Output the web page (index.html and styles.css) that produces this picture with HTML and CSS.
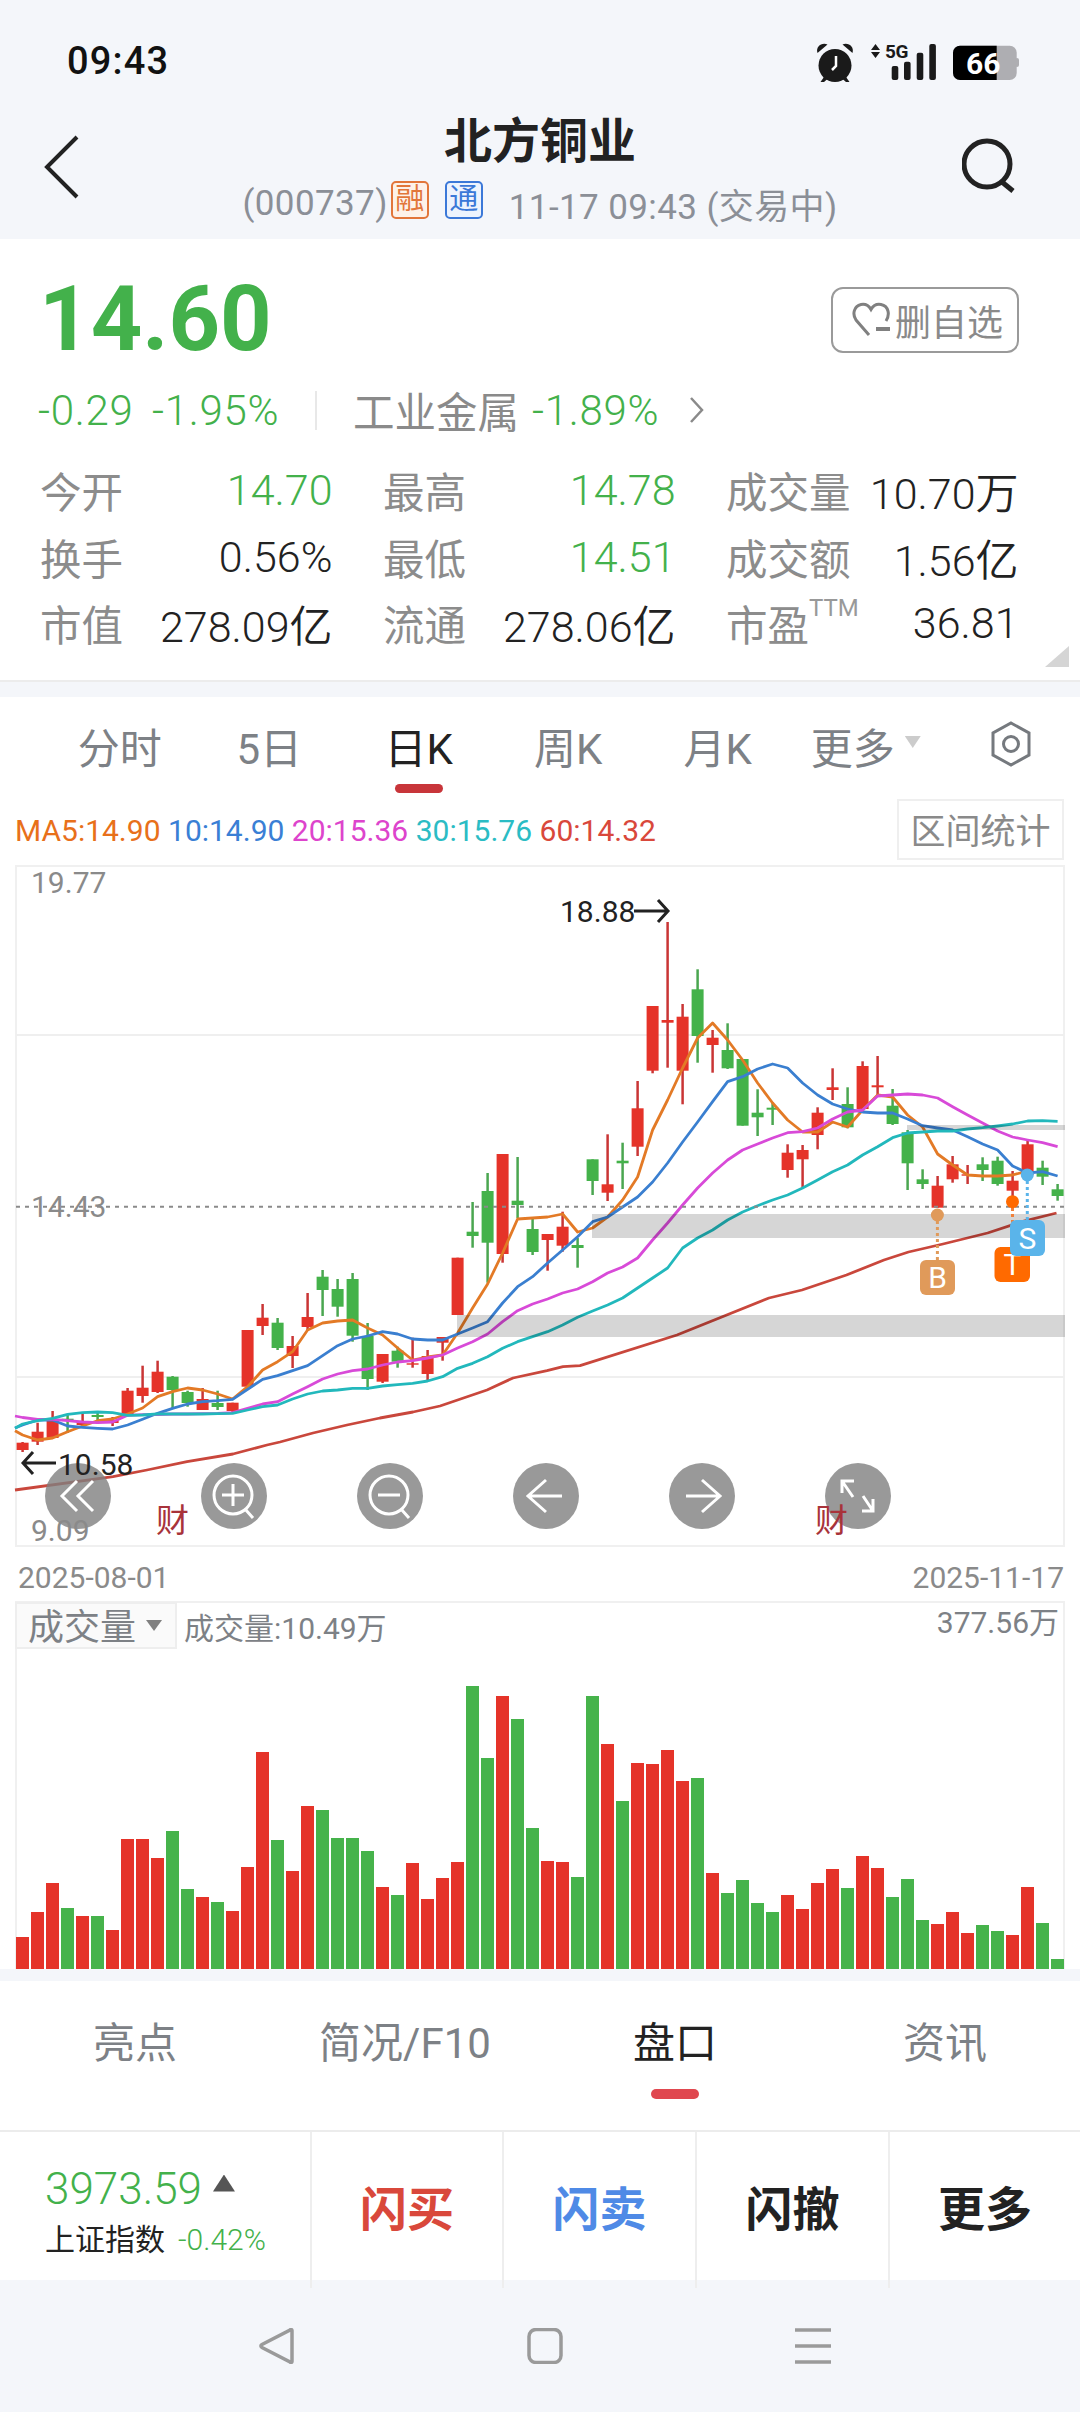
FILE: index.html
```html
<!DOCTYPE html>
<html lang="zh-CN">
<head>
<meta charset="utf-8">
<title>北方铜业</title>
<link rel="stylesheet" href="styles.css">
</head>
<body>
<div class="page">
  <header class="top">
    <div class="status">
      <span class="time">09:43</span>
      <svg class="status-icons" viewBox="815 40 206 44" width="206" height="44">
        <g class="ic-dark">
          <circle cx="835" cy="65.500" r="16.500"/>
          <path d="M817.500 53c-2-6 4-11 10-8.500l-10 8.500zM852.500 53c2-6-4-11-10-8.500l10 8.500z"/>
          <path d="M824 77l-3.500 5h3.500l4-3.500zM846 77l3.500 5H846l-4-3.500z"/>
          <path d="M871 50l4.500-6 4.500 6zM871 52l4.500 6 4.500-6z"/>
          <rect x="891.700" y="66" width="6.600" height="14" rx="2"/>
          <rect x="904" y="61.700" width="6.600" height="18.300" rx="2"/>
          <rect x="916.700" y="52.700" width="6.600" height="27.300" rx="2"/>
          <rect x="929.300" y="44" width="6.600" height="36" rx="2"/>
        </g>
        <path class="ic-hand" d="M836 56v10l-4 4"/>
        <text class="five-g" x="885" y="58">5G</text>
        <rect class="bat-rest" x="953" y="45.700" width="63.700" height="34.300" rx="7"/>
        <rect class="bat-rest" x="1015" y="58" width="4" height="9" rx="2"/>
        <path class="ic-black" d="M960 45.700h36.700V80H960a7 7 0 0 1-7-7V52.700a7 7 0 0 1 7-7z"/>
        <text class="bat-text" x="966" y="74">66</text>
      </svg>
    </div>
    <div class="titlebar">
      <svg class="back" viewBox="0 0 40 64" width="40" height="64"><path d="M34 2 4 32l30 30"/></svg>
      <div class="title-wrap">
        <h1 class="title">北方铜业</h1>
        <div class="subtitle">
          <span>(000737)</span><span class="tag tag-or">融</span><span class="tag tag-bl">通</span><span class="sub-time">11-17 09:43 (交易中)</span>
        </div>
      </div>
      <svg class="search" viewBox="0 0 54 56" width="54" height="56"><circle cx="25" cy="26" r="23"/><path d="M40 44l11 9"/></svg>
    </div>
  </header>

  <section class="quote">
    <div class="price-row">
      <span class="price">14.60</span>
      <button class="watch">
        <svg class="heart" viewBox="0 0 40 36" width="40" height="36"><path class="h1" d="M34 19C38 13 37 4 29 2.500 24 1.500 21 4 19 7.500 17 4 14 1.500 9 2.500 2 4 0 12 4 18l13 15"/><path class="h2" d="M24 27h14"/></svg>
        <span>删自选</span>
      </button>
    </div>
    <div class="change-row">
      <span class="chg chg-a">-0.29</span>
      <span class="chg chg-b">-1.95%</span>
      <i class="vline"></i>
      <span class="sector">工业金属</span>
      <span class="chg chg-c">-1.89%</span>
      <svg class="chev" viewBox="0 0 16 28" width="16" height="28"><path d="M2 2l11 12L2 26"/></svg>
    </div>
    <div class="stats">
      <div class="stat"><span class="k">今开</span><span class="v up">14.70</span></div>
      <div class="stat"><span class="k">最高</span><span class="v up">14.78</span></div>
      <div class="stat"><span class="k">成交量</span><span class="v">10.70万</span></div>
      <div class="stat"><span class="k">换手</span><span class="v">0.56%</span></div>
      <div class="stat"><span class="k">最低</span><span class="v up">14.51</span></div>
      <div class="stat"><span class="k">成交额</span><span class="v">1.56亿</span></div>
      <div class="stat"><span class="k">市值</span><span class="v">278.09亿</span></div>
      <div class="stat"><span class="k">流通</span><span class="v">278.06亿</span></div>
      <div class="stat"><span class="k">市盈<sup>TTM</sup></span><span class="v">36.81</span></div>
    </div>
    <i class="corner"></i>
  </section>

  <section class="chart-sec">
    <nav class="ktabs">
      <span class="ktab">分时</span>
      <span class="ktab">5日</span>
      <span class="ktab on">日K</span>
      <span class="ktab">周K</span>
      <span class="ktab">月K</span>
      <span class="ktab more">更多<i class="caret"></i></span>
      <svg class="hex" viewBox="0 0 40 46" width="40" height="46"><path d="M20 2l18 10v22L20 44 2 34V12z"/><circle cx="20" cy="23" r="7.500"/></svg>
    </nav>
    <div class="ma-row">
      <div class="ma">
        <span class="m5">MA5:14.90</span><span class="m10">10:14.90</span><span class="m20">20:15.36</span><span class="m30">30:15.76</span><span class="m60">60:14.32</span>
      </div>
      <span class="range">区间统计</span>
    </div>
    <svg class="kchart" viewBox="0 865 1080 684" width="1080" height="684">
      <rect class="frame" x="16" y="866" width="1048" height="680"/>
      <path class="grid" d="M16 1035H1064M16 1377H1064"/>
      <g id="candles"></g>
      <g id="lines"></g>
      <path class="dots" d="M16 1206.700H1064"/>
      <path class="band" d="M592 1214H1065V1238H592zM457 1315H1065V1337H457zM907 1125H1065V1130H907z"/>
      <g class="ctl">
        <circle cx="78" cy="1496" r="33"/><circle cx="234" cy="1496" r="33"/><circle cx="390" cy="1496" r="33"/><circle cx="546" cy="1496" r="33"/><circle cx="702" cy="1496" r="33"/><circle cx="858" cy="1496" r="33"/>
      </g>
      <g class="ctl-ic">
        <path d="M77 1481l-15 15 15 15M93 1481l-15 15 15 15"/>
        <circle cx="233" cy="1495" r="19"/><path d="M233 1484v22M222 1495h22M245 1509l8 9"/>
        <circle cx="389" cy="1495" r="19"/><path d="M378 1495h22M401 1509l8 9"/>
        <path d="M562 1496h-34M546 1480l-18 16 18 16"/>
        <path d="M686 1496h34M702 1480l18 16-18 16"/>
        <path d="M854 1481H842V1493M842 1481L853 1497M862 1511H873V1499M873 1511L863 1496"/>
      </g>
      <text class="axis" x="31" y="893">19.77</text>
      <text class="axis" x="31" y="1217">14.43</text>
      <text class="axis" x="31" y="1541">9.09</text>
      <text class="hl" x="560" y="922">18.88</text>
      <path class="hl-arrow" d="M634 911h34M658 900l10 11-10 11"/>
      <path class="hl-arrow" d="M56 1463H23M33 1452l-10 11 10 11"/>
      <text class="hl" x="58" y="1475">10.58</text>
      <text class="cai" x="156" y="1532">财</text>
      <text class="cai" x="815" y="1532">财</text>
      <path class="ln-b" d="M937.400 1215v45"/>
      <path class="ln-t" d="M1012.500 1202v45"/>
      <path class="ln-s" d="M1027.300 1175v45"/>
      <circle class="d-b" cx="937.400" cy="1215" r="6.500"/>
      <circle class="d-t" cx="1012.500" cy="1201.700" r="6.500"/>
      <circle class="d-s" cx="1027.300" cy="1175" r="6.500"/>
      <rect class="d-b" x="920" y="1260" width="35" height="35" rx="6"/>
      <text class="mk" x="937.500" y="1288">B</text>
      <rect class="d-t" x="994.500" y="1247" width="35.500" height="35" rx="6"/>
      <text class="mk" x="1012.500" y="1275">T</text>
      <rect class="d-s" x="1010" y="1220" width="35" height="36" rx="6"/>
      <text class="mk" x="1027.500" y="1249">S</text>
    </svg>
    <div class="dates"><span>2025-08-01</span><span>2025-11-17</span></div>
    <div class="vol">
      <div class="vol-sel">成交量<i class="vol-caret"></i></div>
      <span class="vol-now">成交量:10.49万</span>
      <span class="vol-max">377.56万</span>
      <div class="bars" id="bars"></div>
    </div>
  </section>

  <nav class="subtabs">
    <span class="subtab">亮点</span>
    <span class="subtab">简况/F10</span>
    <span class="subtab on">盘口</span>
    <span class="subtab">资讯</span>
  </nav>

  <div class="trade">
    <div class="index">
      <div class="idx-top"><span class="idx-val">3973.59</span><i class="idx-tri"></i></div>
      <div class="idx-bot"><span class="idx-name">上证指数</span><span class="idx-chg">-0.42%</span></div>
    </div>
    <span class="act red">闪买</span>
    <span class="act blue">闪卖</span>
    <span class="act">闪撤</span>
    <span class="act">更多</span>
  </div>

  <div class="sysnav">
    <svg viewBox="0 0 36 36" width="36" height="36"><path d="M33 2.500c0-1-1-1.500-2-.5L3 16.500c-1.500 1-1.500 2 0 3L31 34c1 1 2 .5 2-.5z"/></svg>
    <svg viewBox="0 0 36 36" width="36" height="36"><rect x="2" y="1.500" width="32" height="33" rx="7"/></svg>
    <svg viewBox="0 0 36 36" width="36" height="36"><path d="M0 2h36M0 18h36M0 34h36"/></svg>
  </div>
</div>
<script src="chart.js"></script>
</body>
</html>
```

FILE: styles.css
```css
* { box-sizing: border-box; }
html, body { margin: 0; padding: 0; }
body {
  width: 1080px;
  height: 2412px;
  overflow: hidden;
  background: #f4f6fa;
  color: #222;
  font-family: Roboto, "Noto Sans CJK SC", sans-serif;
}
i { font-style: normal; display: block; }
.page { width: 1080px; }

/* status + title */
.status {
  height: 100px;
  padding: 22px 59px 0 67px;
  display: flex;
  align-items: center;
  justify-content: space-between;
}
.time { font-size: 38px; font-weight: 500; letter-spacing: 1.200px; color: #111; }
.status-icons { display: block; margin-top: 2px; }
.ic-dark { fill: #1a1a1a; }
.ic-black { fill: #000; }
.ic-hand { fill: none; stroke: #fff; stroke-width: 2.500; }
.five-g { font-size: 19px; font-weight: 700; fill: #1a1a1a; letter-spacing: -.5px; }
.bat-rest { fill: #aeaeb2; }
.bat-text { font-size: 30px; font-weight: 700; fill: #fff; }

.titlebar {
  height: 139px;
  display: grid;
  grid-template-columns: 1fr auto 1fr;
}
.back { margin: 35px 0 0 43px; }
.back path { fill: none; stroke: #222; stroke-width: 4; }
.title-wrap { text-align: center; padding-top: 12px; }
.title { margin: 0; font-size: 48px; font-weight: 700; line-height: 60px; color: #222; }
.subtitle {
  margin-top: 8px;
  height: 46px;
  display: flex;
  align-items: center;
  font-size: 35px;
  letter-spacing: .4px;
  color: #8b8f97;
  white-space: nowrap;
}
.tag {
  width: 38px;
  height: 38px;
  margin-left: 3px;
  border: 2px solid;
  border-radius: 5px;
  font-size: 29px;
  line-height: 32px;
  text-align: center;
  letter-spacing: 0;
  margin-top: -6px;
}
.tag-or { color: #e2763a; background: #fdf2e9; }
.tag-bl { color: #3b78d8; background: #edf3fd; margin-left: 16px; }
.sub-time { margin-left: 26px; }
.search { justify-self: end; margin: 38px 64px 0 0; }
.search circle, .search path { fill: none; stroke: #222; stroke-width: 5; }

/* quote card */
.quote {
  position: relative;
  height: 443px;
  padding-top: 48px;
  background: #fff;
  border-bottom: 2px solid #ececec;
}
.price-row {
  height: 66px;
  padding: 0 61px 0 39px;
  display: flex;
  align-items: center;
  justify-content: space-between;
}
.price { font-size: 90px; font-weight: 700; color: #43b14b; line-height: 68px; }
.watch {
  width: 188px;
  height: 66px;
  padding: 0 0 0 19px;
  display: flex;
  align-items: center;
  gap: 3px;
  background: #fff;
  border: 2px solid #9a9a9a;
  border-radius: 12px;
  font-family: inherit;
  font-size: 36px;
  color: #8a8a8a;
}
.heart { flex: none; }
.h1 { fill: none; stroke: #808080; stroke-width: 3; }
.h2 { fill: none; stroke: #808080; stroke-width: 4; }

.change-row {
  height: 46px;
  margin-top: 34px;
  padding-left: 38px;
  display: flex;
  align-items: center;
  font-size: 42px;
  font-weight: 300;
  letter-spacing: .7px;
  color: #43b14b;
  white-space: nowrap;
}
.chg-a { width: 94px; }
.chg-b { margin-left: 20px; width: 125px; }
.vline { width: 2px; height: 39px; margin-left: 38px; background: #e8e8e8; }
.sector { margin-left: 36px; width: 179px; color: #8a8a8a; font-weight: 400; font-size: 41.500px; letter-spacing: 0; }
.chev { margin-left: 30px; }
.chev path { fill: none; stroke: #8a8a8a; stroke-width: 2.500; }

.stats {
  margin-top: 24px;
  padding: 0 63px 0 40px;
  display: grid;
  grid-template-columns: repeat(3, 292.500px);
  grid-auto-rows: 66.500px;
  column-gap: 50.500px;
}
.stat { display: flex; align-items: center; justify-content: space-between; }
.k { position: relative; font-size: 41.500px; color: #8c8c8c; white-space: nowrap; }
.k sup { position: absolute; left: 83px; top: 2px; font-size: 24px; line-height: 26px; color: #999; }
.v { font-size: 43px; font-weight: 350; color: #222; white-space: nowrap; }
.v.up { color: #43b14b; }
.corner {
  position: absolute;
  right: 11px;
  top: 407px;
  width: 24px;
  height: 21px;
  background: #d5d5d5;
  clip-path: polygon(100% 0, 100% 100%, 0 100%);
}

/* chart section */
.chart-sec { margin-top: 15px; height: 1272px; background: #fff; }
.ktabs {
  height: 100px;
  padding-left: 45px;
  display: grid;
  grid-template-columns: repeat(6, 149.500px) auto;
  align-items: center;
  font-size: 42px;
  color: #7d8186;
}
.ktab { position: relative; height: 100px; padding-top: 3px; text-align: center; line-height: 100px; }
.ktab.on { color: #222; }
.ktab.on::after {
  content: "";
  position: absolute;
  left: 50%;
  bottom: 4px;
  width: 48px;
  height: 9px;
  margin-left: -24px;
  border-radius: 5px;
  background: #c8353a;
}
.more { display: flex; justify-content: center; padding-right: 3px; }
.caret {
  width: 16px;
  height: 12px;
  margin: 36px 0 0 10px;
  background: #ccc;
  clip-path: polygon(0 0, 100% 0, 50% 100%);
}
.hex { margin: -6px 0 0 49px; }
.hex path, .hex circle { fill: none; stroke: #75797e; stroke-width: 3; }

.ma-row {
  height: 68px;
  padding: 2px 16px 0 15px;
  display: flex;
  justify-content: space-between;
  align-items: flex-start;
}
.ma { display: flex; gap: 7.500px; font-size: 30px; line-height: 63px; white-space: nowrap; }
.m5 { color: #e8701a; }
.m10 { color: #3a7fd5; }
.m20 { color: #dd44cc; }
.m30 { color: #2bbcc4; }
.m60 { color: #d9483b; }
.range {
  width: 167px;
  height: 61px;
  border: 2px solid #efefef;
  font-size: 35px;
  line-height: 63px;
  text-align: center;
  color: #8a8a8a;
}

.kchart { display: block; }
.frame { fill: #fff; stroke: #f0f0f0; stroke-width: 2; }
.grid { fill: none; stroke: #efefef; stroke-width: 2; }
.dots { fill: none; stroke: #8a8a8a; stroke-width: 2; stroke-dasharray: 4 5; }
.band { fill: #000; opacity: .16; }
.ctl circle { fill: rgba(128,128,128,.8); }
.ctl-ic path, .ctl-ic circle { fill: none; stroke: #fff; stroke-width: 3; }
.axis { font-size: 30px; fill: #8a8a8a; }
.hl { font-size: 30px; fill: #222; }
.hl-arrow { fill: none; stroke: #222; stroke-width: 3; }
.cai { font-size: 33px; fill: #a8333a; }
.mk { font-size: 30px; fill: #fff; text-anchor: middle; }
.d-b { fill: #e09a5a; }
.d-t { fill: #ff6a00; }
.d-s { fill: #5ab4ea; }
.ln-b, .ln-t, .ln-s { fill: none; stroke-width: 3; stroke-dasharray: 3 3; }
.ln-b { stroke: #e09a5a; }
.ln-t { stroke: #f0803a; }
.ln-s { stroke: #5ab4ea; }
.up-body { fill: #e53329; }
.dn-body { fill: #44b24a; }
.up-wick { stroke: #c93535; stroke-width: 2.500; }
.dn-wick { stroke: #4aa650; stroke-width: 2.500; }
.ma-line { fill: none; stroke-width: 2.800; stroke-linejoin: round; }
.l5 { stroke: #e37a26; }
.l10 { stroke: #3a7fd0; }
.l20 { stroke: #d84ad8; }
.l30 { stroke: #22b8bc; }
.l60 { stroke: #c9473c; }

.dates {
  height: 52px;
  padding: 4px 16px 0 18px;
  display: flex;
  align-items: center;
  justify-content: space-between;
  font-size: 30px;
  color: #8a8a8a;
}
.vol {
  position: relative;
  height: 368px;
  margin: 0 15px;
  border-top: 2px solid #f0f0f0;
  box-shadow: inset 2px 0 0 #f0f0f0, inset -2px 0 0 #f0f0f0;
}
.vol-sel {
  position: absolute;
  left: 0;
  top: -1px;
  width: 162px;
  height: 47px;
  padding-left: 11px;
  display: flex;
  background: #fafafa;
  border: 2px solid #eeeeee;
  font-size: 36px;
  line-height: 49px;
  color: #7d8186;
}
.vol-caret {
  width: 16px;
  height: 11px;
  margin: 16px 0 0 10px;
  background: #808080;
  clip-path: polygon(0 0, 100% 0, 50% 100%);
}
.vol-now, .vol-max { position: absolute; font-size: 30px; line-height: 40px; color: #7d8186; white-space: nowrap; }
.vol-now { left: 169px; top: 6px; }
.vol-max { right: 6px; top: 0; }
.bars {
  position: absolute;
  left: 1px;
  right: 0;
  bottom: 0;
  height: 300px;
  display: flex;
  align-items: flex-end;
  gap: 2.500px;
}
.bar { width: 12.500px; flex: none; }
.bar.r { background: #e53329; }
.bar.g { background: #46b34b; }

/* sub tabs */
.subtabs {
  height: 151px;
  margin-top: 12px;
  display: grid;
  grid-template-columns: repeat(4, 270px);
  background: #fff;
  border-bottom: 2px solid #ececec;
  font-size: 42px;
  color: #7d8186;
}
.subtab { position: relative; padding-top: 33px; line-height: 60px; text-align: center; }
.subtab.on { color: #222; }
.subtab.on::after {
  content: "";
  position: absolute;
  left: 50%;
  top: 108px;
  width: 48px;
  height: 10px;
  margin-left: -24px;
  border-radius: 5px;
  background: #e0474f;
}

/* trade bar */
.trade {
  height: 148px;
  display: grid;
  grid-template-columns: 310px 192px 193px 193px 192px;
  background: #fff;
}
.index { padding: 32px 0 0 45px; }
.idx-top { height: 50px; display: flex; align-items: center; }
.idx-val { font-size: 44px; font-weight: 300; color: #43b14b; }
.idx-tri {
  width: 22px;
  height: 17px;
  margin: -12px 0 0 11px;
  background: #555;
  clip-path: polygon(50% 0, 100% 100%, 0 100%);
}
.idx-bot { margin-top: 6px; display: flex; align-items: center; font-size: 30px; line-height: 40px; }
.idx-chg { margin-left: 13px; color: #43b14b; font-weight: 300; }
.act {
  border-left: 2px solid #eeeeee;
  font-size: 47px;
  font-weight: 700;
  line-height: 156px;
  text-align: center;
  color: #222;
}
.act.red { color: #d9483b; }
.act.blue { color: #4f8ae6; }

/* system nav */
.sysnav {
  height: 132px;
  padding-left: 10px;
  display: flex;
  align-items: center;
  justify-content: center;
  gap: 232px;
}
.sysnav path, .sysnav rect { fill: none; stroke: #9a9a9a; stroke-width: 3.500; }
```

FILE: chart.js
```js
// [colour, bodyTop, bodyBottom, high, low]
var C = [
["r",1442.7,1450,1442,1452],["r",1431.7,1441.7,1422.7,1445],["r",1420,1438,1411,1439],["g",1418.7,1421,1414,1433],
["r",1421.7,1425,1414,1427],["g",1415,1417,1412,1424],["r",1420,1423,1417,1426],["r",1390.7,1415,1388,1415],
["r",1387.7,1396,1365.7,1402.7],["r",1371.7,1392,1360.7,1393],["g",1376.7,1390,1376,1409],["g",1392,1403,1390.7,1406.7],
["r",1399,1410,1388,1410],["g",1403,1407,1390.7,1410],["r",1402.7,1411,1402.7,1412.7],["r",1330,1386.7,1330,1386.7],
["r",1317.7,1326,1304,1335],["g",1322.7,1348,1318,1350],["r",1346,1356,1336,1368],["r",1317,1327,1293,1330],
["g",1276.7,1290,1270,1316],["g",1289,1306.7,1279,1316.7],["g",1279,1335.7,1273,1341.7],["g",1336,1379,1323,1390],
["r",1354,1381.7,1354,1383],["g",1350.7,1361.7,1346.7,1367.7],["r",1363.3,1364.7,1337.7,1367.7],["r",1356,1374,1350,1380],
["r",1337,1342.7,1337,1360.7],["r",1257.7,1315,1257.7,1315],["g",1231.7,1236,1202,1247.7],["g",1191,1242.7,1173,1282.7],
["r",1154,1254,1154,1262.7],["g",1200.7,1205,1157,1218],["g",1229,1252,1218,1255],["r",1234,1240,1234,1270.7],
["r",1226.7,1245.7,1211.7,1251.7],["g",1245,1248,1238,1267.7],["g",1159.3,1181,1159.3,1195],["r",1184.3,1192.7,1134.3,1201],
["g",1160.7,1163.3,1142.7,1189],["r",1108.3,1146.7,1081,1156],["r",1006,1070.7,1006,1073.3],["r",1020,1022.7,922,1067.7],
["r",1016.7,1070.7,1004,1104.3],["g",989.3,1036,969.3,1062.7],["r",1037.7,1045,1030,1072.7],["g",1050,1068.3,1023.3,1069],
["g",1059,1125.7,1059,1125.7],["g",1112.7,1117.3,1089.3,1136],["g",1107.7,1109.7,1102.3,1125],["r",1152.7,1170,1144.3,1177.7],
["r",1150,1159.3,1145,1187.3],["r",1112.7,1135,1107.3,1149.3],["r",1087.3,1090,1068.3,1100],["g",1104,1127.3,1087.3,1128.3],
["r",1066,1109,1061.3,1111.7],["r",1085.3,1087.3,1056,1096.7],["g",1105.7,1124,1089,1125],["g",1132.3,1163.3,1130,1190],
["g",1179.3,1184,1169.3,1189],["r",1185.7,1207.7,1176,1207.7],["r",1164.3,1179.3,1156,1182.7],["r",1174.3,1175.7,1165,1184],
["g",1164.3,1170,1157.3,1181],["g",1160.7,1184,1156.7,1185.7],["r",1180.7,1190.7,1171,1200],["r",1144.3,1175,1141,1175],
["g",1167.7,1176.7,1160.7,1185],["g",1189.3,1196,1184,1200.7]
];
var MA = {
l5:[1430.7,1435,1440,1438,1431.7,1426,1420.7,1419,1414,1408,1396.7,1391.7,1388,1390,1394,1399,1386.7,1370,1361.7,1351.7,1330,1323,1321,1320,1328,1335,1348,1360,1357,1355,1333,1308,1284,1253,1219,1218,1217,1214,1232,1228,1217,1200,1177,1130,1100,1068,1038,1023,1040,1060,1083,1103,1120,1132,1132,1122,1127,1110,1095,1097,1115,1127,1154,1165,1175,1176,1176,1175,1171],
l10:[1428,1425,1420,1420,1426,1427.3,1428.3,1429,1425,1419.3,1413.3,1408.3,1404,1401.7,1400.7,1399.3,1389.3,1379.3,1375.7,1370.7,1365.7,1355.7,1345.7,1339,1336,1331.7,1334,1339,1340,1340,1334,1328,1321.7,1303,1286.7,1276.7,1263,1250,1236.7,1221.7,1217,1207,1197,1182,1163,1142,1122,1101.7,1081.7,1076.7,1069,1064,1068,1083,1095,1104,1109,1112,1113,1113,1119,1125.7,1128,1130,1136.7,1144,1150,1166,1173,1171.7,1176],
l20:[1416,1417.5,1419.3,1419.3,1420.7,1422,1422.7,1422,1415.3,1414.7,1414.5,1414,1414,1413.7,1413.5,1412.7,1408.3,1404,1401.7,1394,1386.7,1379,1374,1370.7,1369,1365,1362,1360.7,1358,1355,1348,1341.7,1334,1321.7,1310.7,1304,1299,1293,1289,1281.7,1273,1267,1258,1240,1223,1205,1188,1173,1160,1150,1144,1138,1132.7,1131.7,1128,1119,1112,1110,1096,1095,1094,1095,1098,1106.7,1115,1123,1131,1137,1140,1142.7,1146.7],
l30:[1428.3,1424,1420.7,1418.3,1414.3,1412.7,1412,1412.7,1415.3,1415,1414,1414,1414,1414,1413.7,1413.3,1410,1406.7,1405,1399,1394,1391,1390,1388.3,1388.3,1386,1384.7,1383.3,1381,1376.7,1368.3,1363.3,1356.7,1348.3,1341.7,1336.7,1331.7,1325,1317.3,1311,1305,1298,1288,1278,1268,1248,1238,1230,1220,1212,1205.7,1200,1195,1188,1180,1171.7,1165,1155,1146.7,1137.7,1133,1132,1131,1131,1129,1127.7,1126,1124,1121,1120.7,1121.3]
};
var MA60 = "15,1490 113,1476.7 147,1470 187,1461.7 233,1454 267,1445 280,1442 313,1433 347,1425 380,1418 413,1412 440,1406 487,1390 513,1378 547,1370.7 563,1366.7 580,1365.7 677,1335 769,1298 802,1290 846.5,1275 884,1260 908.5,1252 943,1244 987.6,1233 1022,1221.7 1056.5,1213";
var VOL = [1192,1115,1028,1105,1128,1128,1171,896,898,955,873,1047,1072,1086,1114,981,637,901,992,798,811,894,894,933,1040,1065,968,1077,1015,966,438,655,468,538,864,963,965,1012,468,613,784,670,672,630,722,714,1000,1058,1019,1090,1117,1065,1108,1030,987,1045,948,983,1071,1018,1140,1152,1117,1178,1156,1174,1185,1041,1148,1256];

function px(i) { return 22.6 + 15 * i; }

var s = "";
C.forEach(function (c, i) {
  var x = px(i), t = c[0] === "r" ? "up" : "dn";
  s += '<path class="' + t + '-wick" d="M' + x + " " + c[3] + "V" + c[4] + '"/>';
  s += '<rect class="' + t + '-body" x="' + (x - 6) + '" y="' + c[1] + '" width="12" height="' + (c[2] - c[1]) + '"/>';
});
document.getElementById("candles").innerHTML = s;

var l = "";
Object.keys(MA).forEach(function (k) {
  var pts = MA[k].map(function (y, i) { return (i === 0 ? 15 : px(i - 1)) + "," + y; }).join(" ");
  l += '<polyline class="ma-line ' + k + '" points="' + pts + '"/>';
});
l += '<polyline class="ma-line l60" points="' + MA60 + '"/>';
document.getElementById("lines").innerHTML = l;

var b = "";
VOL.forEach(function (v, i) {
  var h = ((1287 - v) / 3).toFixed(1);
  b += '<div class="bar ' + C[i][0] + '" style="height:' + h + 'px"></div>';
});
document.getElementById("bars").innerHTML = b;
```
